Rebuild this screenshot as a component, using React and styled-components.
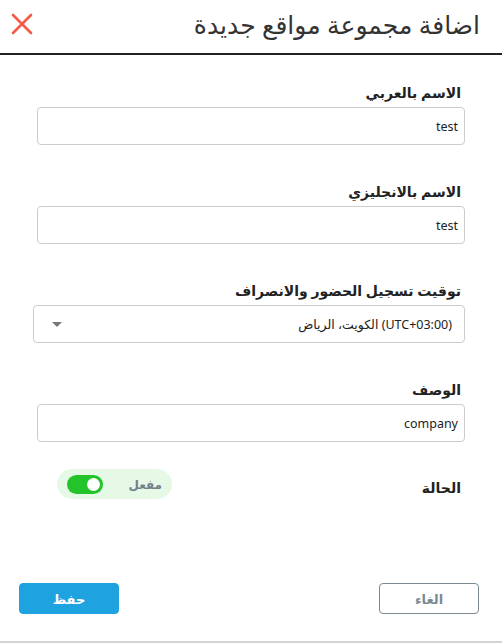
import React, { useState } from 'react';
import styled, { createGlobalStyle } from 'styled-components';

const GlobalStyle = createGlobalStyle`
  html, body {
    margin: 0;
    padding: 0;
    background: #fff;
  }
  body {
    font-family: "Noto Sans", "DejaVu Sans", sans-serif;
    color: #222;
  }
  * { box-sizing: border-box; }
`;

const Modal = styled.div`
  width: 502px;
  height: 643px;
  direction: rtl;
  display: flex;
  flex-direction: column;
  border-bottom: 2px solid #d5d5d5;
`;

const Header = styled.div`
  height: 55px;
  display: flex;
  align-items: center;
  justify-content: space-between;
  padding: 0 22px 6px 10px;
  border-bottom: 2px solid #222;
`;

const Title = styled.h2`
  margin: 0;
  font-size: 25px;
  font-weight: 400;
  color: #333;
`;

const CloseButton = styled.button`
  border: none;
  background: none;
  padding: 0;
  width: 24px;
  height: 24px;
  cursor: pointer;
  display: flex;
  align-items: center;
  justify-content: center;
`;

const Body = styled.div`
  flex: 1;
  padding: 28px 37px 0 37px;
  display: flex;
  flex-direction: column;
`;

const Field = styled.div`
  display: flex;
  flex-direction: column;
  gap: 5px;
  margin-bottom: 37px;
`;

const Label = styled.label`
  font-size: 14px;
  line-height: 19px;
  font-weight: 700;
  color: #222;
  padding-right: 4px;
`;

const TextInput = styled.input`
  direction: rtl;
  width: 100%;
  height: 38px;
  border: 1px solid #ccc;
  border-radius: 4px;
  padding: 0 6px;
  font-family: "Noto Sans", "DejaVu Sans", sans-serif;
  font-size: 12.5px;
  color: #222;
  background: #fff;
  &:focus { outline: none; border-color: #1fa3e0; }
`;

const Select = styled.div`
  margin-left: -4px;
  height: 38px;
  border: 1px solid #ccc;
  border-radius: 4px;
  display: flex;
  align-items: center;
  justify-content: space-between;
  padding: 0 12px 0 18px;
  font-size: 12.5px;
  color: #222;
`;

const Caret = styled.span`
  width: 0;
  height: 0;
  border-left: 5px solid transparent;
  border-right: 5px solid transparent;
  border-top: 5px solid #777;
`;

const StatusRow = styled.div`
  display: flex;
  align-items: center;
  justify-content: space-between;
  margin-top: -10px;
  padding-left: 20px;
`;

const StatusLabel = styled(Label)`
  padding-top: 6px;
`;

const TogglePill = styled.div`
  width: 115px;
  height: 30px;
  border-radius: 15px;
  background: #e6f8e6;
  display: flex;
  align-items: center;
  justify-content: space-between;
  padding: 0 10px 0 10px;
`;

const ToggleText = styled.span`
  font-size: 12px;
  font-weight: 700;
  color: #72808a;
`;

const Switch = styled.button`
  width: 36px;
  height: 19px;
  border-radius: 10px;
  border: none;
  padding: 0 3px;
  background: ${p => (p.$on ? '#22c42a' : '#c5c5c5')};
  display: flex;
  align-items: center;
  justify-content: ${p => (p.$on ? 'flex-start' : 'flex-end')};
  cursor: pointer;
`;

const Knob = styled.span`
  width: 13px;
  height: 13px;
  border-radius: 50%;
  background: #fff;
`;

const Footer = styled.div`
  display: flex;
  justify-content: space-between;
  align-items: center;
  padding: 0 23px 27px 19px;
`;

const Button = styled.button`
  width: 100px;
  height: 31px;
  border-radius: 4px;
  font-family: "Noto Sans", "DejaVu Sans", sans-serif;
  font-size: 13px;
  font-weight: 700;
  cursor: pointer;
  border: 1px solid ${p => (p.$primary ? '#1fa3e0' : '#7b8a90')};
  background: ${p => (p.$primary ? '#1fa3e0' : '#fff')};
  color: ${p => (p.$primary ? '#fff' : '#7b8a90')};
`;

const App = () => {
  const [active, setActive] = useState(true);

  return (
    <>
      <GlobalStyle />
      <Modal>
        <Header>
          <Title>اضافة مجموعة مواقع جديدة</Title>
          <CloseButton aria-label="close">
            <svg width="22" height="22" viewBox="0 0 22 22">
              <path d="M2 2 L20 20 M20 2 L2 20" stroke="#f45a45" strokeWidth="2.6" strokeLinecap="round" />
            </svg>
          </CloseButton>
        </Header>
        <Body>
          <Field>
            <Label>الاسم بالعربي</Label>
            <TextInput defaultValue="test" />
          </Field>
          <Field>
            <Label>الاسم بالانجليزي</Label>
            <TextInput defaultValue="test" />
          </Field>
          <Field>
            <Label>توقيت تسجيل الحضور والانصراف</Label>
            <Select>
              <span>(UTC+03:00) الكويت، الرياض</span>
              <Caret />
            </Select>
          </Field>
          <Field>
            <Label>الوصف</Label>
            <TextInput defaultValue="company" />
          </Field>
          <StatusRow>
            <StatusLabel>الحالة</StatusLabel>
            <TogglePill>
              <ToggleText>مفعل</ToggleText>
              <Switch $on={active} onClick={() => setActive(!active)}>
                <Knob />
              </Switch>
            </TogglePill>
          </StatusRow>
        </Body>
        <Footer>
          <Button>الغاء</Button>
          <Button $primary>حفظ</Button>
        </Footer>
      </Modal>
    </>
  );
};

export default App;
